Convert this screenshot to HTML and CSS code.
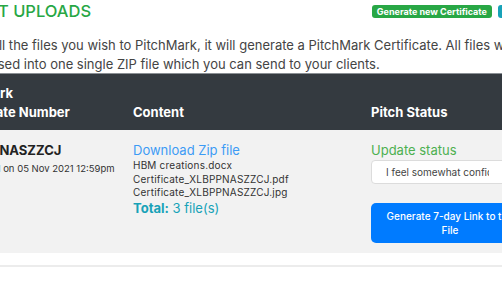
FILE: index.html
```html
<!DOCTYPE html>
<html>
<head>
    <title>Latest Uploads</title>
    <link rel="stylesheet" href="styles.css">
</head>
<body>
    <div class="page">
        <div class="page-top">
            <h2 class="page-title">LATEST UPLOADS</h2>
            <div class="page-actions">
                <a class="btn-small btn-green" href="#">Generate new Certificate</a>
                <a class="btn-small btn-teal" href="#">View Certificates</a>
            </div>
        </div>
        <p class="intro">Upload all the files you wish to PitchMark, it will generate a PitchMark Certificate. All files will be compressed into one single ZIP file which you can send to your clients.</p>

        <div class="uploads">
            <div class="uploads-head">
                <div class="cell">PitchMark<br>Certificate Number</div>
                <div class="cell">Content</div>
                <div class="cell">Pitch Status</div>
            </div>
            <div class="uploads-row">
                <div class="cell cell-cert">
                    <div class="cert-number">XLBPPNASZZCJ</div>
                    <div class="cert-date">Uploaded on 05 Nov 2021 12:59pm</div>
                </div>
                <div class="cell">
                    <a class="zip-link" href="#">Download Zip file</a>
                    <div class="file-name">HBM creations.docx</div>
                    <div class="file-name">Certificate_XLBPPNASZZCJ.pdf</div>
                    <div class="file-name">Certificate_XLBPPNASZZCJ.jpg</div>
                    <div class="file-total"><b>Total:</b> 3 file(s)</div>
                </div>
                <div class="cell">
                    <div class="status-label">Update status</div>
                    <select class="status-select">
                        <option>I feel somewhat confident</option>
                        <option>I feel very confident</option>
                        <option>I am not confident</option>
                    </select>
                    <button class="link-btn">Generate 7-day Link to the File</button>
                </div>
            </div>
        </div>
        <div class="divider"></div>
    </div>
</body>
</html>
```
FILE: styles.css
```css
body {
    font-family: Inter, "Open Sans", sans-serif;
    margin: 0;
    background-color: #fff;
    color: #444;
    overflow: hidden;
}

.page {
    width: 644px;
    margin-left: -60px;
}

.page-top {
    display: flex;
    justify-content: space-between;
    align-items: center;
    height: 22px;
}

.page-title {
    margin: 0;
    font-size: 16.5px;
    font-weight: 500;
    color: #28a745;
    line-height: 22px;
    padding-left: 7px;
}

.page-actions {
    display: flex;
    gap: 6px;
}

.btn-small {
    display: block;
    font-size: 9px;
    font-weight: 700;
    color: #fff;
    text-decoration: none;
    padding: 0 5px;
    line-height: 13px;
    border-radius: 3px;
}

.btn-green {
    background-color: #28a745;
}

.btn-teal {
    background-color: #17a2b8;
}

.intro {
    margin: 14px 0 0;
    padding-left: 4px;
    font-size: 13px;
    line-height: 18.5px;
    width: 630px;
}

.uploads-head,
.uploads-row {
    display: grid;
    grid-template-columns: 185px 238px 221px;
}

.uploads-head {
    background-color: #343a40;
    border-top: 1px solid #8a8f94;
    color: #fff;
    font-size: 13px;
    font-weight: 700;
    line-height: 19px;
}

.uploads-head .cell {
    padding: 10px 8px 8px;
    align-self: end;
}

.uploads-row {
    background-color: #f2f2f2;
}

.uploads-row .cell {
    padding: 12px 8px 10px;
}

.uploads-row .cell-cert {
    padding-left: 17px;
}

.cert-number {
    font-size: 13px;
    font-weight: 700;
    line-height: 17px;
    color: #222;
}

.cert-date {
    margin-top: 3px;
    font-size: 9.5px;
    line-height: 13.5px;
    color: #333;
    white-space: nowrap;
}

.zip-link {
    display: block;
    font-size: 13px;
    line-height: 17px;
    color: #3d9bf5;
    text-decoration: none;
}

.file-name {
    font-size: 10px;
    line-height: 13.5px;
    letter-spacing: 0.2px;
    color: #333;
}

.file-total {
    font-size: 13px;
    line-height: 17px;
    color: #17a2b8;
}

.status-label {
    font-size: 13px;
    line-height: 17px;
    color: #4cb050;
}

.status-select {
    display: block;
    width: 158px;
    height: 24px;
    margin-top: 1px;
    padding: 0 39px 0 14px;
    font-family: inherit;
    font-size: 10px;
    color: #444;
    background-color: #fff;
    border: 1px solid #dcdcdc;
    border-radius: 4px;
    -webkit-appearance: none;
    appearance: none;
}

.link-btn {
    display: block;
    width: 158px;
    margin-top: 19px;
    padding: 6px 8px;
    font-family: inherit;
    font-size: 10px;
    font-weight: 500;
    line-height: 14px;
    color: #fff;
    background-color: #007bff;
    border: none;
    border-radius: 5px;
    cursor: pointer;
}

.divider {
    margin-top: 12px;
    border-top: 2px solid #ececec;
}
```
